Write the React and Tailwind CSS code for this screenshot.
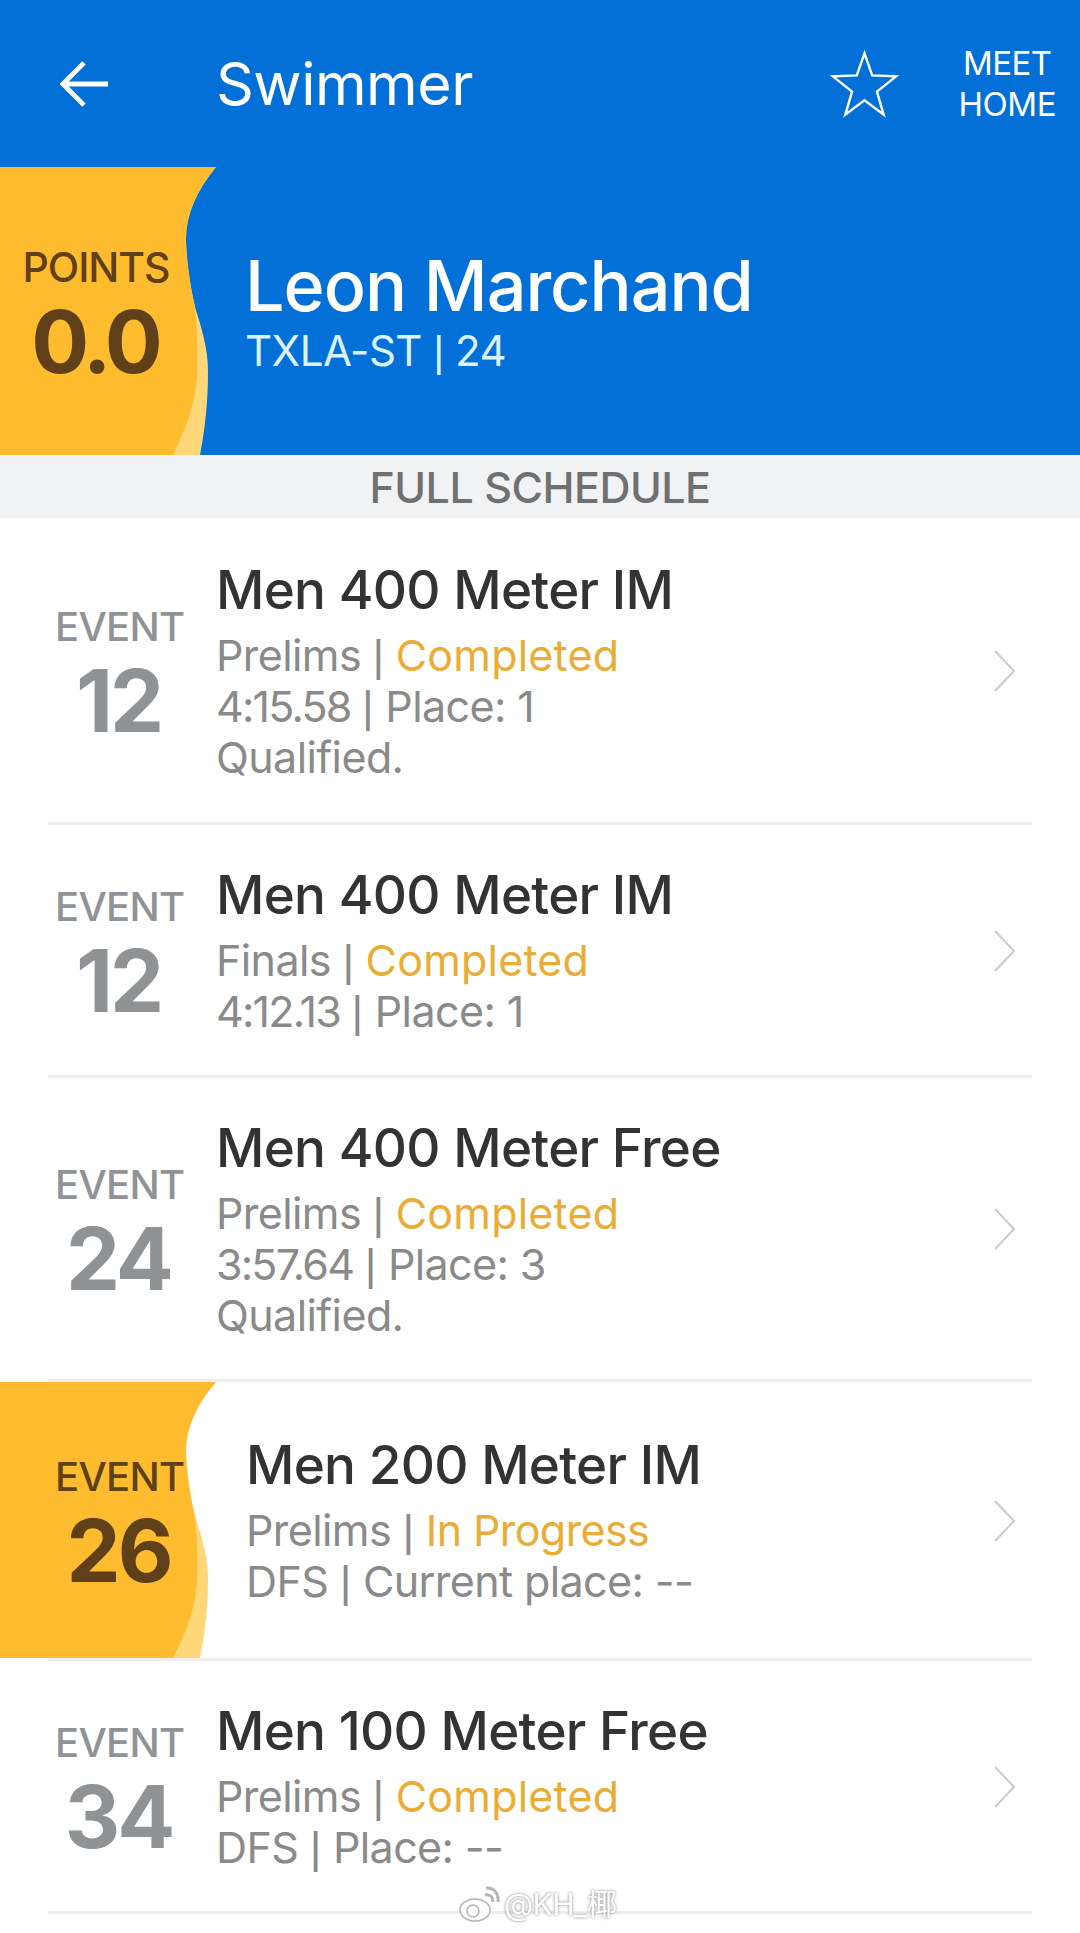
import React from 'react';

const FONT = "font-['Inter','Liberation_Sans',sans-serif]";

const events = [
  { id: 1, num: '12', title: 'Men 400 Meter IM', round: 'Prelims', status: 'Completed', result: ['4:15.58', 'Place: 1'], note: 'Qualified.', height: 'h-[307px]' },
  { id: 2, num: '12', title: 'Men 400 Meter IM', round: 'Finals', status: 'Completed', result: ['4:12.13', 'Place: 1'], height: 'h-[253px]' },
  { id: 3, num: '24', title: 'Men 400 Meter Free', round: 'Prelims', status: 'Completed', result: ['3:57.64', 'Place: 3'], note: 'Qualified.', height: 'h-[304px]' },
  { id: 4, num: '26', title: 'Men 200 Meter IM', round: 'Prelims', status: 'In Progress', result: ['DFS', 'Current place: --'], height: 'h-[279px]', active: true },
  { id: 5, num: '34', title: 'Men 100 Meter Free', round: 'Prelims', status: 'Completed', result: ['DFS', 'Place: --'], height: 'h-[253px]' },
];

// yellow badge with the wavy right edge, stretched over its row
const Wave = ({ className }) => (
  <svg className={`absolute left-0 top-0 w-[216px] ${className}`} viewBox="0 0 216 288" preserveAspectRatio="none">
    <path d="M0 0H216C196 24 185 50 186 75C187 100 191 122 195 140C201 160 208 180 208 205C208 235 205 262 200 288H0Z" fill="#fed878" />
    <path d="M0 0H216C196 24 185 50 186 75C187 100 191 122 195 140C197 160 198 185 197 210C195 240 184 265 173 288H0Z" fill="#febc2e" />
  </svg>
);

const Chevron = () => (
  <svg className="h-[44px] w-[24px] shrink-0" viewBox="0 0 24 44" fill="none" stroke="#c9cbcd" strokeWidth="2">
    <path d="M3 2L22 22L3 42" />
  </svg>
);

const Pipe = () => <span className="font-['Liberation_Sans'] text-[45px] tracking-normal">|</span>;

const EventRow = ({ event }) => {
  const isTime = event.result[0].includes(':');
  return (
    <div className={`relative flex items-center pb-[2px] ${event.height}`}>
      {event.active && <Wave className="h-[calc(100%-3px)]" />}
      <div className={`relative w-[216px] shrink-0 pl-[55px] pt-[8px] ${event.active ? 'text-[#5f4018]' : 'text-[#909396]'}`}>
        <div className="w-[127px] text-center text-[40px] leading-[44px] font-medium tracking-[-0.7px]">EVENT</div>
        <div className="mt-[8px] w-[127px] text-center text-[86px] leading-[88px] font-bold tracking-[-3px]">{event.num}</div>
      </div>
      <div className={`relative flex-1 ${event.active ? 'pl-[30px]' : ''}`}>
        <div className="mb-[9px] text-[53px] leading-[62px] font-medium tracking-[-0.7px] text-[#333333]">{event.title}</div>
        <div className="text-[43px] leading-[51px] tracking-[-0.6px] text-[#8a8a8a]">
          {event.round} <Pipe /> <span className={`text-[#e9ad35] ${event.active ? '' : 'tracking-[0.2px]'}`}>{event.status}</span>
        </div>
        <div className="text-[43px] leading-[51px] tracking-[-0.6px] text-[#8a8a8a]">
          <span className={isTime ? 'tracking-[-1.8px]' : ''}>{event.result[0]}</span> <Pipe /> {event.result[1]}
        </div>
        {event.note && <div className="text-[43px] leading-[51px] tracking-[-0.6px] text-[#8a8a8a]">{event.note}</div>}
      </div>
      <div className="relative pr-[64px]"><Chevron /></div>
      <div className="absolute bottom-0 left-[48px] right-[48px] h-[3px] bg-[#eeeeee]" />
    </div>
  );
};

const App = () => {
  return (
    <div className={`${FONT} min-h-[1933px] w-[1080px] overflow-hidden bg-white`}>
      {/* Top bar */}
      <div className="flex h-[167px] items-center bg-[#0270d7] pl-[60px] pr-[24px] text-white">
        <svg className="h-[48px] w-[48px]" viewBox="0 0 50 48" fill="none" stroke="white" strokeWidth="5">
          <path d="M25 2L3 24L25 46M3 24H50" />
        </svg>
        <div className="ml-[108px] flex-1 text-[59px] leading-none tracking-[-0.5px]">Swimmer</div>
        <svg className="mr-[60px] h-[68px] w-[69px]" viewBox="0 0 72 70" fill="none" stroke="white" strokeWidth="2.5">
          <path d="M36 3L44 26L69 27L49 43L56 67L36 52L16 67L23 43L3 27L28 26Z" />
        </svg>
        <div className="text-center text-[33px] leading-[41px] tracking-[-0.5px]">MEET<br />HOME</div>
      </div>

      {/* Swimmer hero */}
      <div className="relative flex h-[288px] items-center bg-[#0270d7]">
        <Wave className="h-full" />
        <div className="relative w-[245px] shrink-0 pt-[18px] text-[#5f4018]">
          <div className="w-[192px] text-center text-[41px] leading-[44px] font-medium tracking-[-1px]">POINTS</div>
          <div className="w-[190px] text-center text-[86px] leading-[106px] font-bold tracking-[-4px]">0.0</div>
        </div>
        <div className="relative pt-[2px] text-white">
          <div className="text-[70px] leading-[76px] font-medium tracking-[-1px]">Leon Marchand</div>
          <div className="mt-[2px] text-[42px] leading-[50px] tracking-[-0.5px] text-[#dcf2ff]">TXLA-ST <span className="font-['Liberation_Sans']">|</span> 24</div>
        </div>
      </div>

      <div className="flex h-[63px] items-center justify-center bg-[#f1f2f4] pt-[2px] text-[43px] font-medium tracking-[-0.5px] text-[#707070]">
        FULL SCHEDULE
      </div>

      {events.map((event) => (
        <EventRow key={event.id} event={event} />
      ))}

      {/* Watermark */}
      <div className="absolute left-[458px] top-[1885px] flex items-center gap-[4px] text-[30px] leading-none tracking-[-0.5px] text-white [text-shadow:0_0_3px_#777777] font-['Inter','Noto_Sans_CJK_SC',sans-serif]">
        <svg className="h-[38px] w-[42px]" viewBox="0 0 42 38" fill="white" stroke="#b5b5b5" strokeWidth="1.5">
          <ellipse cx="17" cy="25" rx="15" ry="11" />
          <circle cx="15" cy="26" r="6" fill="none" />
          <path d="M27 10C32 9 35 12 35 17M28 3C36 2 41 9 40 17" fill="none" strokeWidth="3" />
        </svg>
        <span>@KH_椰</span>
      </div>
    </div>
  );
};

export default App;
